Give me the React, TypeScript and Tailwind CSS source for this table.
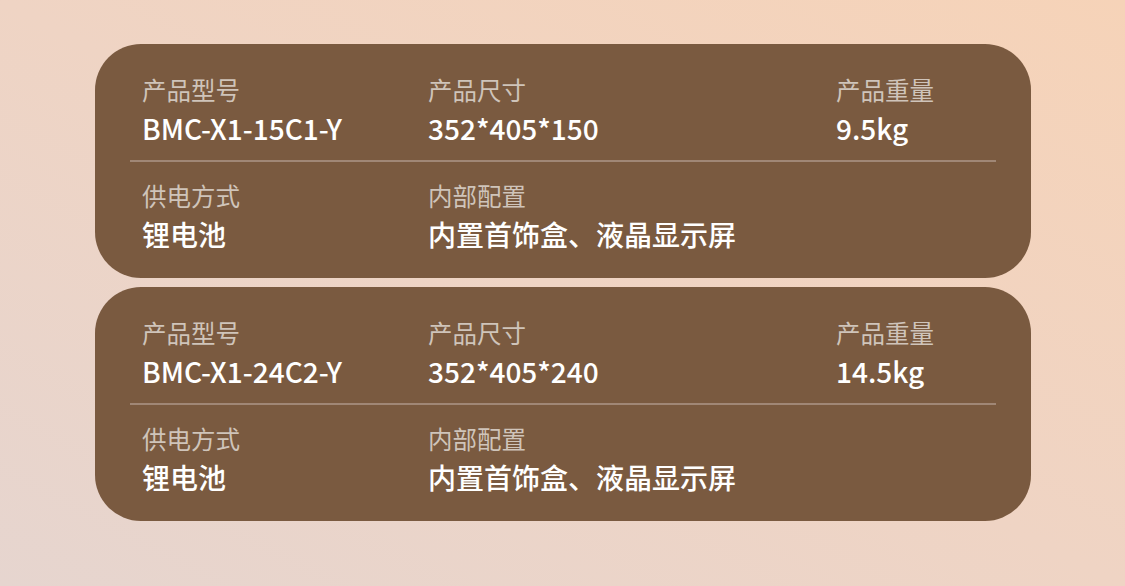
import React from 'react';

interface Spec {
    model: string;
    size: string;
    weight: string;
    power: string;
    config: string;
}

const specs: Spec[] = [
    { model: 'BMC-X1-15C1-Y', size: '352*405*150', weight: '9.5kg', power: '锂电池', config: '内置首饰盒、液晶显示屏' },
    { model: 'BMC-X1-24C2-Y', size: '352*405*240', weight: '14.5kg', power: '锂电池', config: '内置首饰盒、液晶显示屏' },
];

const Field: React.FC<{ label: string; value: string }> = ({ label, value }) => (
    <div className="flex flex-col">
        <p className="-mt-0.5 h-6 text-[24.5px] leading-6 text-[#cfc4ba]">{label}</p>
        <p className="mt-3 h-7 text-[28px] leading-7 font-medium text-white">{value}</p>
    </div>
);

const SpecCard: React.FC<{ spec: Spec }> = ({ spec }) => (
    <div className="w-[936px] h-[234px] rounded-[46px] bg-[#7a5a40] px-[35px] pt-9">
        <div className="grid grid-cols-[286px_408px_1fr] px-3">
            <Field label="产品型号" value={spec.model} />
            <Field label="产品尺寸" value={spec.size} />
            <Field label="产品重量" value={spec.weight} />
        </div>
        <div className="mt-[18px] h-[2px] bg-[#a08776]" />
        <div className="mt-6 grid grid-cols-[286px_408px_1fr] px-3">
            <Field label="供电方式" value={spec.power} />
            <Field label="内部配置" value={spec.config} />
        </div>
    </div>
);

export default function App() {
    return (
        <div
            className="w-[1125px] h-[586px] bg-gradient-to-tr from-[#e6d5cf] via-[#efd4c4] to-[#f6d3b8] pt-11 pl-[95px] flex flex-col gap-[9px]"
            style={{ fontFamily: '"Noto Sans CJK SC", "Noto Sans", sans-serif' }}
        >
            {specs.map((s) => (
                <SpecCard key={s.model} spec={s} />
            ))}
        </div>
    );
}
